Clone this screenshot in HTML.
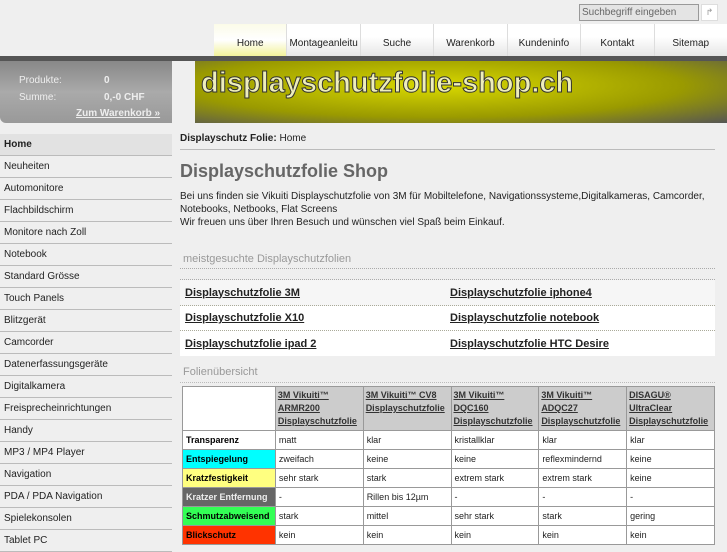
<!DOCTYPE html>
<html><head><meta charset="utf-8"><style>
*{margin:0;padding:0;box-sizing:border-box}
body{width:727px;height:545px;overflow:hidden;background:#efefef;font-family:"Liberation Sans",sans-serif;position:relative;color:#222}
.abs{position:absolute}
#search{left:579px;top:4px;width:120px;height:17px;border:1px solid #999;background:#e4e4e4;font-size:10px;color:#666;padding:2px 2px}
#sbtn{left:701px;top:4px;width:17px;height:17px;background:#fff;border:1px solid #ddd;font-size:9px;color:#999;text-align:center;line-height:15px}
#nav{left:214px;top:24px;width:513px;height:32px;display:flex}
#nav div{flex:1;background:linear-gradient(#fff,#fff 40%,#e6e6e6);border-left:1px solid #ddd;font-size:10px;text-align:center;padding-top:14px;white-space:nowrap;overflow:hidden}
#nav div.on{background:linear-gradient(#fbfbe8,#fff 50%,#f2f29a);border-left:none}
#bar{left:0;top:56px;width:727px;height:5px;background:#555}
#cart{left:0;top:61px;width:172px;height:62px;background:linear-gradient(#888,#aaa 50%,#999);color:#eee;font-size:10px;border-radius:0 0 0 6px}
#banner{left:195px;top:61px;width:532px;height:62px;background:radial-gradient(ellipse at 45% 40%,#d8d800,#9a9a00 60%,#555 100%)}
#banner span{position:absolute;left:6px;top:6px;font-size:29px;font-weight:bold;color:#eeeebb;-webkit-text-stroke:1px #333}
#side{left:0;top:134px;width:172px}
#side div{height:22px;border-bottom:1px solid #bbb;font-size:10px;padding:5px 4px;color:#222}
#side div.on{background:#e2e2e2;font-weight:bold}
#main{left:180px;top:132px;width:535px}
.bc{font-size:10px;padding:1px 0 4px;border-bottom:1px solid #bbb;height:18px}
h1{font-size:18px;color:#666;margin-top:11px;height:24px}
p{font-size:10px;line-height:13px;margin-top:5px}
.h2{font-size:11px;color:#999;margin-top:24px;padding:0 3px 3px;border-bottom:1px dotted #aaa}
.links{margin-top:10px;border-top:1px dotted #aaa}
.links div{display:flex;height:25px;border-bottom:1px dotted #aa9;background:#fff;align-items:center}
.links div:first-child{background:#f6f6f6;height:26px}
.links div:last-child{border:none}
.links a{flex:0 0 265px;padding-left:5px;font-size:11px;font-weight:bold;color:#222;text-decoration:underline}
.h3{font-size:11px;color:#999;margin-top:10px;padding:0 3px 4px;border-bottom:1px dotted #bbb}
table{border-collapse:collapse;margin:3px 0 0 2px;width:533px;font-size:9px;background:#fff}
td{border:1px solid #999;padding:2px 3px;height:19px;vertical-align:middle}
th{background:#ccc;border:1px solid #999;text-align:left;font-weight:bold;padding:2px;vertical-align:top;line-height:13px;color:#333;text-decoration:underline;width:88px}
th:first-child{background:#fff;width:93px}
td.l{font-weight:bold;color:#000}
</style></head><body>
<div id="search" class="abs">Suchbegriff eingeben</div>
<div id="sbtn" class="abs">↱</div>
<div id="nav" class="abs"><div class="on">Home</div><div>Montageanleitu</div><div>Suche</div><div>Warenkorb</div><div>Kundeninfo</div><div>Kontakt</div><div>Sitemap</div></div>
<div id="bar" class="abs"></div>
<div id="cart" class="abs">
<div class="abs" style="left:19px;top:14px">Produkte:</div><div class="abs" style="left:104px;top:14px;font-weight:bold">0</div>
<div class="abs" style="left:19px;top:31px">Summe:</div><div class="abs" style="left:104px;top:31px;font-weight:bold">0,-0 CHF</div>
<div class="abs" style="left:76px;top:47px;font-weight:bold;text-decoration:underline">Zum Warenkorb »</div></div>
<div id="banner" class="abs"><span>displayschutzfolie-shop.ch</span></div>
<div id="side" class="abs">
<div class="on">Home</div><div>Neuheiten</div><div>Automonitore</div><div>Flachbildschirm</div><div>Monitore nach Zoll</div><div>Notebook</div><div>Standard Grösse</div><div>Touch Panels</div><div>Blitzgerät</div><div>Camcorder</div><div>Datenerfassungsgeräte</div><div>Digitalkamera</div><div>Freisprecheinrichtungen</div><div>Handy</div><div>MP3 / MP4 Player</div><div>Navigation</div><div>PDA / PDA Navigation</div><div>Spielekonsolen</div><div>Tablet PC</div></div>
<div id="main" class="abs">
<div class="bc"><b>Displayschutz Folie:</b> Home</div>
<h1>Displayschutzfolie Shop</h1>
<p>Bei uns finden sie Vikuiti Displayschutzfolie von 3M für Mobiltelefone, Navigationssysteme,Digitalkameras, Camcorder, Notebooks, Netbooks, Flat Screens<br>Wir freuen uns über Ihren Besuch und wünschen viel Spaß beim Einkauf.</p>
<div class="h2">meistgesuchte Displayschutzfolien</div>
<div class="links">
<div><a>Displayschutzfolie 3M</a><a>Displayschutzfolie iphone4</a></div>
<div><a>Displayschutzfolie X10</a><a>Displayschutzfolie notebook</a></div>
<div><a>Displayschutzfolie ipad 2</a><a>Displayschutzfolie HTC Desire</a></div></div>
<div class="h3">Folienübersicht</div>
<table>
<tr><th></th><th>3M Vikuiti™ ARMR200 Displayschutzfolie</th><th>3M Vikuiti™ CV8 Displayschutzfolie</th><th>3M Vikuiti™ DQC160 Displayschutzfolie</th><th>3M Vikuiti™ ADQC27 Displayschutzfolie</th><th>DISAGU® UltraClear Displayschutzfolie</th></tr>
<tr><td class="l">Transparenz</td><td>matt</td><td>klar</td><td>kristallklar</td><td>klar</td><td>klar</td></tr>
<tr><td class="l" style="background:#00ffff">Entspiegelung</td><td>zweifach</td><td>keine</td><td>keine</td><td>reflexmindernd</td><td>keine</td></tr>
<tr><td class="l" style="background:#ffff80">Kratzfestigkeit</td><td>sehr stark</td><td>stark</td><td>extrem stark</td><td>extrem stark</td><td>keine</td></tr>
<tr><td class="l" style="background:#666;color:#eee">Kratzer Entfernung</td><td>-</td><td>Rillen bis 12µm</td><td>-</td><td>-</td><td>-</td></tr>
<tr><td class="l" style="background:#33ff55">Schmutzabweisend</td><td>stark</td><td>mittel</td><td>sehr stark</td><td>stark</td><td>gering</td></tr>
<tr><td class="l" style="background:#ff3300">Blickschutz</td><td>kein</td><td>kein</td><td>kein</td><td>kein</td><td>kein</td></tr>
</table></div>
</body></html>
